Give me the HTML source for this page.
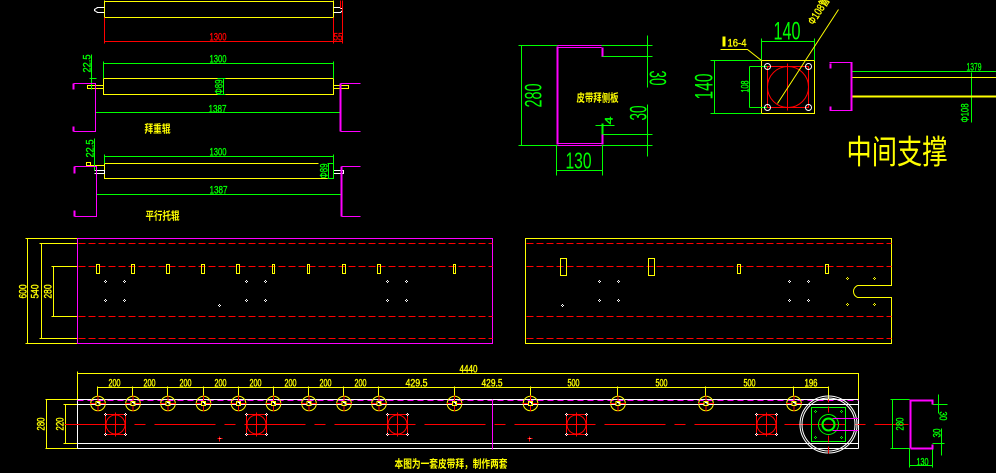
<!DOCTYPE html>
<html><head><meta charset="utf-8"><style>
html,body{margin:0;padding:0;background:#000;width:996px;height:473px;overflow:hidden}
svg{display:block}
.l{fill:none;shape-rendering:crispEdges}
.y{stroke:#ff0}.g{stroke:#0f0}.r{stroke:#f00}.m{stroke:#f0f}.w{stroke:#fff}
.t2{stroke-width:2}
text{font-family:"Liberation Sans","WenQuanYi Zen Hei","Noto Sans CJK SC",sans-serif;font-size:11px}
.ty{fill:#ff0;stroke:#ff0;stroke-width:.35}.tg{fill:#0f0;stroke:#0f0;stroke-width:.35}.tr{fill:#f00;stroke:#f00;stroke-width:.35}
.b{stroke:none}
.cn{font-family:"WenQuanYi Zen Hei","Noto Sans CJK SC",sans-serif;font-weight:700;stroke:none}
</style></head><body>
<svg width="996" height="473" viewBox="0 0 996 473" xmlns="http://www.w3.org/2000/svg">
<defs>
<path id="d" class="l" d="M-1.5 0h1M.5 0h1M-.5 -1h1M-.5 1h1"/>
<g id="roller">
<circle r="7.3" fill="none" stroke="#ff0"/>
<path class="l r" d="M-8 0h16M0 -8v16"/>
<rect x="-2" y="-2" width="4" height="4" class="l y" style="fill:#000"/>
<path class="l w" d="M-1 -1h2v2"/>
</g>
<g id="sq">
<rect x="0" y="0" width="20" height="20" class="l r"/>
<circle cx="10" cy="10" r="9.5" fill="none" stroke="#f00"/>
<path class="l r" d="M10 -2v24M0 10h20"/>
<use href="#d" x="0" y="0" style="stroke:#fff"/>
<use href="#d" x="20" y="0" style="stroke:#fff"/>
<use href="#d" x="0" y="20" style="stroke:#fff"/>
<use href="#d" x="20" y="20" style="stroke:#fff"/>
</g>
</defs>
<rect width="996" height="473" fill="#000"/>
<g transform="translate(.5,.5)">

<!-- top roller -->
<path class="l y" d="M104 0V17H333V0M104 1H333"/>
<path class="l w" d="M104 7H97L94 9V10L97 12H104M333 7H340V8H342V10L340 12H333"/>
<path class="l r" d="M104 17V43M333 17V43M342 0V43M340 0V8M104 41H342"/>
<text class="tr" x="209" y="40" textLength="17" lengthAdjust="spacingAndGlyphs">1300</text>
<text class="tr" x="333" y="40" textLength="9" lengthAdjust="spacingAndGlyphs">55</text>

<!-- second roller -->
<path class="l y" d="M103 78H333V94H103ZM87 85H103V88H87ZM333 85H348V88H333Z"/>
<path class="l g" d="M103 63H333M103 61V78M333 61V78M91 54V89M89 78H96M95 107V115M340 107V115M95 112H340"/>
<path class="l g" d="M223 78V94M217 78H225M217 94H225"/>
<text class="tg" x="209" y="62" textLength="17" lengthAdjust="spacingAndGlyphs">1300</text>
<text class="tg" transform="translate(90,72) rotate(-90)" textLength="18" lengthAdjust="spacingAndGlyphs">22.5</text>
<text class="tg" transform="translate(222,94) rotate(-90)" textLength="15" lengthAdjust="spacingAndGlyphs">Φ89</text>
<text class="tg" x="208" y="112" textLength="18" lengthAdjust="spacingAndGlyphs">1387</text>
<path class="l m" d="M73 83H95V131H73M340 83H360M340 131H360"/>
<path class="l m t2" d="M73 83V89M73 126V131M340 83V131"/>
<text class="ty cn" x="144" y="132" style="font-size:11px" textLength="26" lengthAdjust="spacingAndGlyphs">拜重辊</text>

<!-- third roller -->
<path class="l y" d="M104 163H318M104 163V178H333V163M86 165H104M86 162H90V166H86Z"/>
<path class="l w" d="M94 170H104V173H94M333 170H343V173H333"/>
<path class="l g" d="M104 156H333M104 154V163M333 154V178H327M94 138V170M96 194H341M96 190V197M341 190V197M328 163V178M327 163H333"/>
<text class="tg" x="209" y="155" textLength="17" lengthAdjust="spacingAndGlyphs">1300</text>
<text class="tg" transform="translate(93,157) rotate(-90)" textLength="18" lengthAdjust="spacingAndGlyphs">22.5</text>
<text class="tg" transform="translate(327,178) rotate(-90)" textLength="15" lengthAdjust="spacingAndGlyphs">Φ89</text>
<text class="tg" x="209" y="193" textLength="18" lengthAdjust="spacingAndGlyphs">1387</text>
<path class="l m" d="M74 166H96V216H74M341 166H360M341 216H360"/>
<path class="l m t2" d="M74 166V173M74 210V216M341 166V216"/>
<text class="ty cn" x="145" y="219" style="font-size:11px" textLength="34" lengthAdjust="spacingAndGlyphs">平行托辊</text>

<!-- side plate -->
<path class="l g" d="M518 45H652M518 145H652M521 45V145M601 56H652M601 134H652M647 35V87M647 104V156M595 125H614M556 170H602M556 145V175M602 145V175"/>
<path class="l g t2" d="M602 123V134"/>
<path class="l m" d="M557 45H601M557 47H601M557 143H601M557 145H601"/>
<path class="l m t2" d="M557 46V144M602 47V56M602 134V144"/>
<text class="tg b" transform="translate(541,107) rotate(-90)" style="font-size:24px" textLength="24" lengthAdjust="spacingAndGlyphs">280</text>
<text class="tg b" transform="translate(649,70) rotate(90)" style="font-size:24px" textLength="15" lengthAdjust="spacingAndGlyphs">30</text>
<text class="tg b" transform="translate(646,120) rotate(-90)" style="font-size:24px" textLength="15" lengthAdjust="spacingAndGlyphs">30</text>
<text class="tg" transform="translate(612,124) rotate(-90)" textLength="8" lengthAdjust="spacingAndGlyphs">4</text>
<text class="tg b" x="565" y="168" style="font-size:23px" textLength="26" lengthAdjust="spacingAndGlyphs">130</text>
<text class="ty cn" x="576" y="101" style="font-size:11px" textLength="42" lengthAdjust="spacingAndGlyphs">皮带拜侧板</text>

<!-- flange -->
<rect x="761" y="60" width="53" height="53" class="l y"/>
<path class="l g" d="M761 41H814M761 38V60M814 38V60M710 60H761M710 113H761M714 60V113M749 66H768M749 107H768M749 66V107"/>
<rect x="767" y="66" width="41" height="41" class="l r"/>
<circle cx="787.5" cy="86.5" r="20.5" fill="none" stroke="#f00"/>
<path class="l r" d="M787 63V110"/>
<g fill="none" stroke="#fff"><circle cx="767" cy="66" r="3"/><circle cx="808" cy="66" r="3"/><circle cx="767" cy="107" r="3"/><circle cx="808" cy="107" r="3"/></g>
<path fill="none" stroke="#ff0" d="M838 9L777 103M720 49H747L761 60"/>
<text class="tg b" x="773" y="39" style="font-size:25px" textLength="27" lengthAdjust="spacingAndGlyphs">140</text>
<text class="tg b" transform="translate(712,99) rotate(-90)" style="font-size:25px" textLength="26" lengthAdjust="spacingAndGlyphs">140</text>
<text class="tg" transform="translate(748,92) rotate(-90)" textLength="12" lengthAdjust="spacingAndGlyphs">108</text>
<text class="ty" transform="translate(813,25) rotate(-57)" textLength="30" lengthAdjust="spacingAndGlyphs">Φ108管</text>
<rect x="722" y="36" width="3" height="10" fill="#ff0"/>
<text class="ty" x="727" y="46" textLength="19" lengthAdjust="spacingAndGlyphs">16-4</text>

<!-- C section middle support -->
<path class="l m" d="M829 62H852M829 110H852"/>
<path class="l m t2" d="M830 63V68M830 106V110M851 62V110"/>
<path class="l g" d="M852 71H996M971 72V122M968 77H975M968 96H975"/>
<path class="l y" d="M852 77H996"/>
<path class="l y t2" d="M852 96H996"/>
<text class="tg" x="966" y="70" textLength="15" lengthAdjust="spacingAndGlyphs">1379</text>
<text class="tg" transform="translate(968,122) rotate(-90)" textLength="19" lengthAdjust="spacingAndGlyphs">Φ108</text>
<text class="ty b" x="846" y="163" style="font-family:'WenQuanYi Zen Hei','Noto Sans CJK SC',sans-serif;font-size:33px" textLength="101" lengthAdjust="spacingAndGlyphs">中间支撑</text>

<!-- left plate -->
<path class="l y" d="M25 238H77M25 343H77M27 238V343M39 243H77M39 338H77M41 243V338M51 266H77M51 316H77M53 266V316"/>
<rect x="77" y="238" width="415" height="105" class="l m"/>
<text class="ty" transform="translate(26,298) rotate(-90)" textLength="14" lengthAdjust="spacingAndGlyphs">600</text>
<text class="ty" transform="translate(38,298) rotate(-90)" textLength="14" lengthAdjust="spacingAndGlyphs">540</text>
<text class="ty" transform="translate(51,298) rotate(-90)" textLength="14" lengthAdjust="spacingAndGlyphs">280</text>
<path class="l r" stroke-dasharray="7 3" d="M78 243H492M78 266H492M78 316H492M78 338H492"/>
<path class="l y" d="M96 264h3v9h-3zM131 264h3v9h-3zM166 264h3v9h-3zM201 264h3v9h-3zM236 264h3v9h-3zM272 264h2v9h-2zM307 264h2v9h-2zM342 264h3v9h-3zM377 264h3v9h-3zM453 264h2v9h-2z"/>
<g style="stroke:#fff">
<use href="#d" x="105" y="281"/><use href="#d" x="124" y="281"/><use href="#d" x="105" y="300"/><use href="#d" x="124" y="300"/>
<use href="#d" x="219" y="305"/>
<use href="#d" x="246" y="281"/><use href="#d" x="265" y="281"/><use href="#d" x="246" y="300"/><use href="#d" x="265" y="300"/>
<use href="#d" x="387" y="281"/><use href="#d" x="406" y="281"/><use href="#d" x="387" y="300"/><use href="#d" x="406" y="300"/>
</g>

<!-- right plate -->
<path class="l y" d="M857 285H891V238H525V343H891V297H857"/>
<path fill="none" stroke="#ff0" d="M857 285Q853 287 853 291Q853 295 857 297"/>
<path class="l r" stroke-dasharray="7 3" d="M526 243H891M526 266H891M526 316H891M526 338H891"/>
<path class="l y" d="M560 258h6v17h-6zM648 258h6v17h-6zM737 264h3v9h-3zM825 264h3v9h-3z"/>
<g style="stroke:#fff">
<use href="#d" x="599" y="281"/><use href="#d" x="618" y="281"/><use href="#d" x="599" y="300"/><use href="#d" x="618" y="300"/>
<use href="#d" x="562" y="305"/>
<use href="#d" x="789" y="281"/><use href="#d" x="808" y="281"/><use href="#d" x="789" y="300"/><use href="#d" x="808" y="300"/>
</g>
<g style="stroke:#ff0">
<use href="#d" x="847" y="278"/><use href="#d" x="874" y="278"/><use href="#d" x="847" y="304"/><use href="#d" x="874" y="304"/>
</g>

<!-- bottom assembly -->
<path class="l y" d="M77 371V399M77 373H858V399M97 387H828M45 399H77M45 448H77M46 399V448M63 404H77M63 443H77M65 404V443"/>
<path class="l w" d="M77 399H858M77 404H858M77 443H858M77 448H858M77 399V448M858 399V448"/>
<path class="l m" stroke-dasharray="6 4" d="M77 400H858"/>
<path class="l m" d="M492 399V449"/>
<path class="l y" d="M97 386V396M132 386V396M167 386V396M203 386V396M238 386V396M273 386V396M308 386V396M343 386V396M378 386V396M454 386V396M530 386V396M617 386V396M705 386V396M793 386V396M828 386V399"/>
<path class="l r" stroke-dasharray="61 9 11 9" d="M64 424H908"/>
<use href="#roller" x="97.5" y="403"/><use href="#roller" x="132.5" y="403"/><use href="#roller" x="167.5" y="403"/><use href="#roller" x="203" y="403"/><use href="#roller" x="238" y="403"/><use href="#roller" x="273" y="403"/><use href="#roller" x="308.5" y="403"/><use href="#roller" x="343.5" y="403"/><use href="#roller" x="378.5" y="403"/><use href="#roller" x="454" y="403"/><use href="#roller" x="530" y="403"/><use href="#roller" x="617.5" y="403"/><use href="#roller" x="705.5" y="403"/><use href="#roller" x="793.5" y="403"/>
<use href="#sq" x="105" y="414"/><use href="#sq" x="246" y="414"/><use href="#sq" x="387" y="414"/><use href="#sq" x="566" y="414"/><use href="#sq" x="756" y="414"/>
<path class="l r" d="M217 438h5M219 436v5M527 438h5M529 436v5"/>
<path class="l w" d="M219 438h1M529 438h1"/>

<text class="ty" x="459" y="372" textLength="18" lengthAdjust="spacingAndGlyphs">4440</text>
<text class="ty" x="108" y="386" textLength="12" lengthAdjust="spacingAndGlyphs">200</text>
<text class="ty" x="143" y="386" textLength="12" lengthAdjust="spacingAndGlyphs">200</text>
<text class="ty" x="179" y="386" textLength="12" lengthAdjust="spacingAndGlyphs">200</text>
<text class="ty" x="214" y="386" textLength="12" lengthAdjust="spacingAndGlyphs">200</text>
<text class="ty" x="249" y="386" textLength="12" lengthAdjust="spacingAndGlyphs">200</text>
<text class="ty" x="284" y="386" textLength="12" lengthAdjust="spacingAndGlyphs">200</text>
<text class="ty" x="319" y="386" textLength="12" lengthAdjust="spacingAndGlyphs">200</text>
<text class="ty" x="354" y="386" textLength="12" lengthAdjust="spacingAndGlyphs">200</text>
<text class="ty" x="405" y="386" textLength="22" lengthAdjust="spacingAndGlyphs">429.5</text>
<text class="ty" x="481" y="386" textLength="21" lengthAdjust="spacingAndGlyphs">429.5</text>
<text class="ty" x="567" y="386" textLength="12" lengthAdjust="spacingAndGlyphs">500</text>
<text class="ty" x="655" y="386" textLength="12" lengthAdjust="spacingAndGlyphs">500</text>
<text class="ty" x="743" y="386" textLength="12" lengthAdjust="spacingAndGlyphs">500</text>
<text class="ty" x="804" y="386" textLength="13" lengthAdjust="spacingAndGlyphs">196</text>
<text class="ty" transform="translate(44,430) rotate(-90)" textLength="13" lengthAdjust="spacingAndGlyphs">280</text>
<text class="ty" transform="translate(63,430) rotate(-90)" textLength="13" lengthAdjust="spacingAndGlyphs">220</text>
<text class="ty cn" x="394" y="467" style="font-size:11px" textLength="113" lengthAdjust="spacingAndGlyphs">本图为一套皮带拜，制作两套</text>

<!-- drive roller -->
<circle cx="828" cy="424" r="28.5" fill="none" stroke="#fff"/>
<circle cx="828" cy="424" r="26.5" fill="none" stroke="#fff"/>
<rect x="811" y="407" width="34" height="34" class="l g"/>
<circle cx="828" cy="424" r="10" fill="none" stroke="#0f0"/>
<circle cx="828" cy="424" r="6" fill="none" stroke="#0f0" stroke-width="2"/>
<path class="l m" d="M832 418H858M832 430H858"/>
<path class="l r" d="M828 399V402M828 406V412M828 435V442M828 446V453"/>
<g style="stroke:#0f0"><use href="#d" x="815" y="411"/><use href="#d" x="841" y="411"/><use href="#d" x="815" y="437"/><use href="#d" x="841" y="437"/></g>

<!-- end view -->
<path class="l g" d="M890 399H909M890 448H909M892 399V448M932 404H947M932 443H944M938 394V413M941 428V455M909 465H932M909 448V467M932 448V467"/>
<path class="l m t2" d="M910 399V448M932 400V404M932 444V448"/>
<path class="l m t2" d="M910 400H933M910 448H933"/>
<text class="tg" transform="translate(903,430) rotate(-90)" textLength="13" lengthAdjust="spacingAndGlyphs">280</text>
<text class="tg" transform="translate(939,411) rotate(90)" textLength="9" lengthAdjust="spacingAndGlyphs">30</text>
<text class="tg" transform="translate(940,437) rotate(-90)" textLength="9" lengthAdjust="spacingAndGlyphs">30</text>
<text class="tg" x="916" y="465" textLength="12" lengthAdjust="spacingAndGlyphs">130</text>
</g>
</svg>
</body></html>
